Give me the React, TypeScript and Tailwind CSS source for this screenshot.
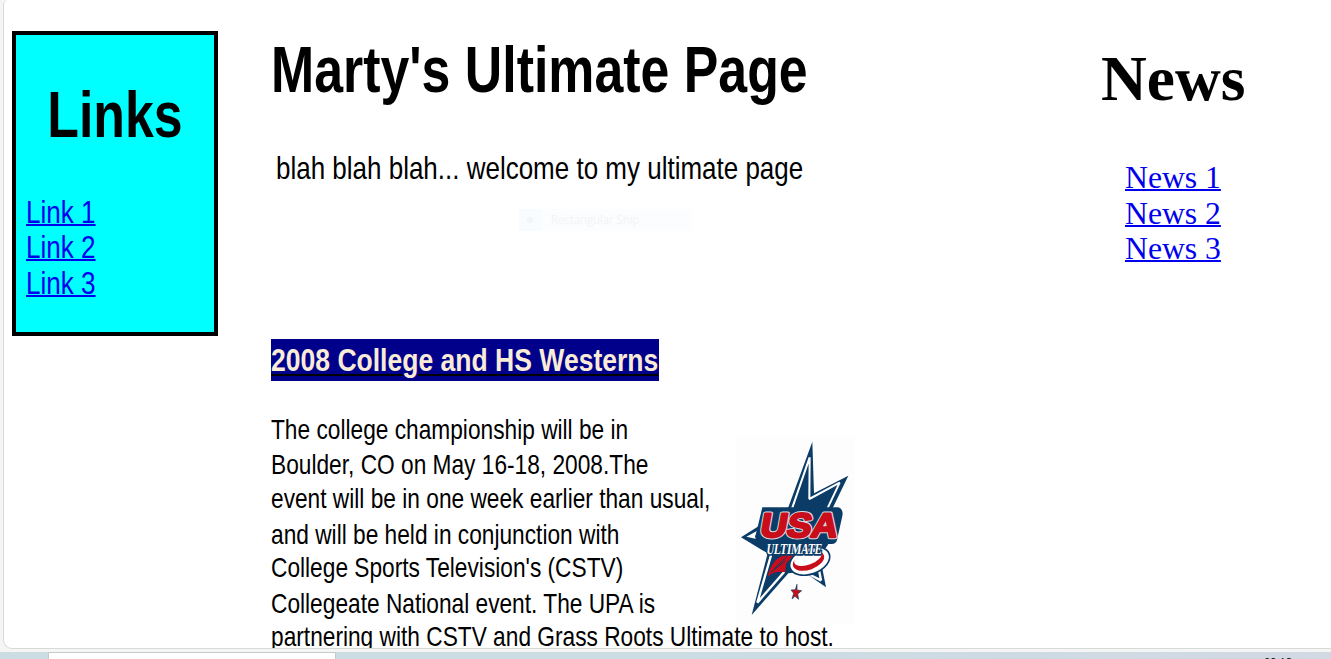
const narrow = "font-['Liberation_Sans',sans-serif]";

const story = [
  { text: 'The college championship will be in', height: 'h-[35px]' },
  { text: 'Boulder, CO on May 16-18, 2008.The', height: 'h-[34px]' },
  { text: 'event will be in one week earlier than usual,', height: 'h-[36px]' },
  { text: 'and will be held in conjunction with', height: 'h-[33px]' },
  { text: "College Sports Television's (CSTV)", height: 'h-[36px]' },
  { text: 'Collegeate National event. The UPA is', height: 'h-[33px]' },
  { text: 'partnering with CSTV and Grass Roots Ultimate to host.', height: 'h-[35px]' },
];

function Logo() {
  return (
    <svg viewBox="33 21 357 561" className="h-[187px] w-[119px] bg-[#fdfdfd]">
      <path d="M262 35L267 190L370 137L322 236L318 330L285 380L303 472L236 425L190 430L80 555L128 370L48 322L190 232Z" fill="#0b3c67" />
      <path d="M254 82L201 236M254 82L253 207L344 158L306 238" fill="none" stroke="#fff" strokeWidth="6" strokeLinejoin="bevel" />
      <path d="M64 320L97 302L90 320L98 328Z" fill="#fff" />
      <path d="M138 376L97 518L178 425" fill="none" stroke="#fff" strokeWidth="7" strokeLinejoin="bevel" />
      <path d="M250 432L288 451L280 410" fill="none" stroke="#fff" strokeWidth="7" strokeLinejoin="bevel" />
      <path d="M128 440Q140 385 182 374L207 376L184 400L180 427Q150 420 128 440Z" fill="#c90d1b" />
      <path d="M138 426L180 393M148 416L187 378" stroke="#0b3c67" strokeWidth="3" />
      <g transform="rotate(-20 254 393)">
        <ellipse cx="254" cy="393" rx="65" ry="42" fill="#0b3c67" />
        <ellipse cx="254" cy="393" rx="60" ry="37" fill="#fff" />
        <ellipse cx="251" cy="391" rx="49" ry="27" fill="#c90d1b" />
        <ellipse cx="252" cy="382" rx="43" ry="21" fill="#fff" />
      </g>
      <path d="M112 232H340Q356 238 352 258L336 330Q333 342 320 342H110Q88 338 92 316Z" fill="#0b3c67" />
      <g transform="translate(102 322) skewX(-10)" fontFamily="Liberation Sans, sans-serif" fontWeight="bold" fontSize="102" strokeLinejoin="round">
        <text textLength="232" lengthAdjust="spacingAndGlyphs" fill="#d9dde2" stroke="#d9dde2" strokeWidth="13">USA</text>
        <text textLength="232" lengthAdjust="spacingAndGlyphs" fill="#c90d1b" stroke="#c90d1b" strokeWidth="7">USA</text>
      </g>
      <text transform="translate(123 372) skewX(-8)" fontFamily="Liberation Serif, serif" fontWeight="bold" fontSize="46" textLength="166" lengthAdjust="spacingAndGlyphs" fill="#fff" stroke="#0b3c67" strokeWidth="10" strokeLinejoin="round" paintOrder="stroke">ULTIMATE</text>
      <path d="M216 463L216 480L230 482L218 492L221 508L210 499L201 507L206 490L198 480L211 479Z" fill="#c90d1b" stroke="#0b3c67" strokeWidth="2" />
    </svg>
  );
}

export default function App() {
  return (
    <div className="flex h-[659px] w-[1331px] flex-col overflow-hidden bg-[#f5f5f5] text-black">
      <main className="ml-[3px] flex h-[649px] shrink-0 items-start overflow-hidden rounded-bl-[9px] rounded-tl-[5px] border-b border-l border-[#d6dad9] bg-white">
        <nav className={`${narrow} ml-2 mt-[31px] h-[305px] w-[206px] shrink-0 whitespace-nowrap border-4 border-black bg-[#00ffff]`}>
          <h1 className="mt-[44px] origin-center scale-x-[0.81] text-center text-[64px] font-bold leading-[72px]">Links</h1>
          <div className="ml-[10px] mt-[44px] flex origin-left scale-x-[0.815] flex-col items-start text-[32px] leading-[35.3px] text-[#0000ee]">
            <a className="underline decoration-2">Link 1</a>
            <a className="underline decoration-2">Link 2</a>
            <a className="underline decoration-2">Link 3</a>
          </div>
        </nav>
        <section className={`${narrow} ml-[53px] w-[700px] shrink-0 whitespace-nowrap`}>
          <h1 className="mt-[34px] origin-left scale-x-[0.81] text-[64px] font-bold leading-[72px]">Marty's Ultimate Page</h1>
          <p className="ml-[5px] mt-[44px] origin-left scale-x-[0.812] text-[32px] leading-[36px]">blah blah blah... welcome to my ultimate page</p>
          <div className="ml-[248px] mt-[23px] flex h-[22px] w-[173px] items-center bg-[#fbfdff] font-['Open_Sans',sans-serif] text-[12px] text-[#f3f4f5]">
            <span className="flex h-full w-[22px] items-center justify-center bg-[#f8fcff]"><span className="size-[6px] rounded-full bg-[#f3f4f5]" /></span>
            <span className="ml-[10px] origin-left scale-x-[0.94]">Rectangular Snip</span>
          </div>
          <h2 className="mt-[108px] h-[42px] w-[388px] bg-[#00008b] text-[32px] font-bold leading-[43px] text-[#faebd7]">
            <span className="block w-[467px] origin-left scale-x-[0.829] underline decoration-black decoration-2 underline-offset-[3px]">2008 College and HS Westerns</span>
          </h2>
          <div className="mt-[32px] flex">
            <div className="w-[465px] text-[28px] leading-[34px]">
              {story.map((line) => <p key={line.text} className={`${line.height} origin-left scale-x-[0.811]`}>{line.text}</p>)}
            </div>
            <div className="mt-[24px]"><Logo /></div>
          </div>
        </section>
        <aside className="ml-[130px] mt-[42px] w-[160px] shrink-0 whitespace-nowrap font-['Liberation_Serif',serif]">
          <h1 className="origin-left scale-x-[0.99] text-[64px] font-bold leading-[74px]">News</h1>
          <div className="ml-[24px] mt-[44px] flex origin-left scale-x-[0.99] flex-col items-start text-[32px] leading-[35.5px] text-[#0000ee]">
            <a className="underline decoration-2">News 1</a>
            <a className="underline decoration-2">News 2</a>
            <a className="underline decoration-2">News 3</a>
          </div>
        </aside>
      </main>
      <footer className="mt-[3px] flex h-[7px] shrink-0 overflow-hidden bg-linear-to-r from-[#cbdce3] via-[#cbdce3] to-[#d1d9e3]">
        <div className="ml-[48px] h-[7px] w-[288px] shrink-0 border-x border-t border-[#c5c9cb] bg-white" />
        <span className="ml-[928px] mt-[2px] font-['Open_Sans',sans-serif] text-[11px] leading-[15px]">09:18</span>
      </footer>
    </div>
  );
}
